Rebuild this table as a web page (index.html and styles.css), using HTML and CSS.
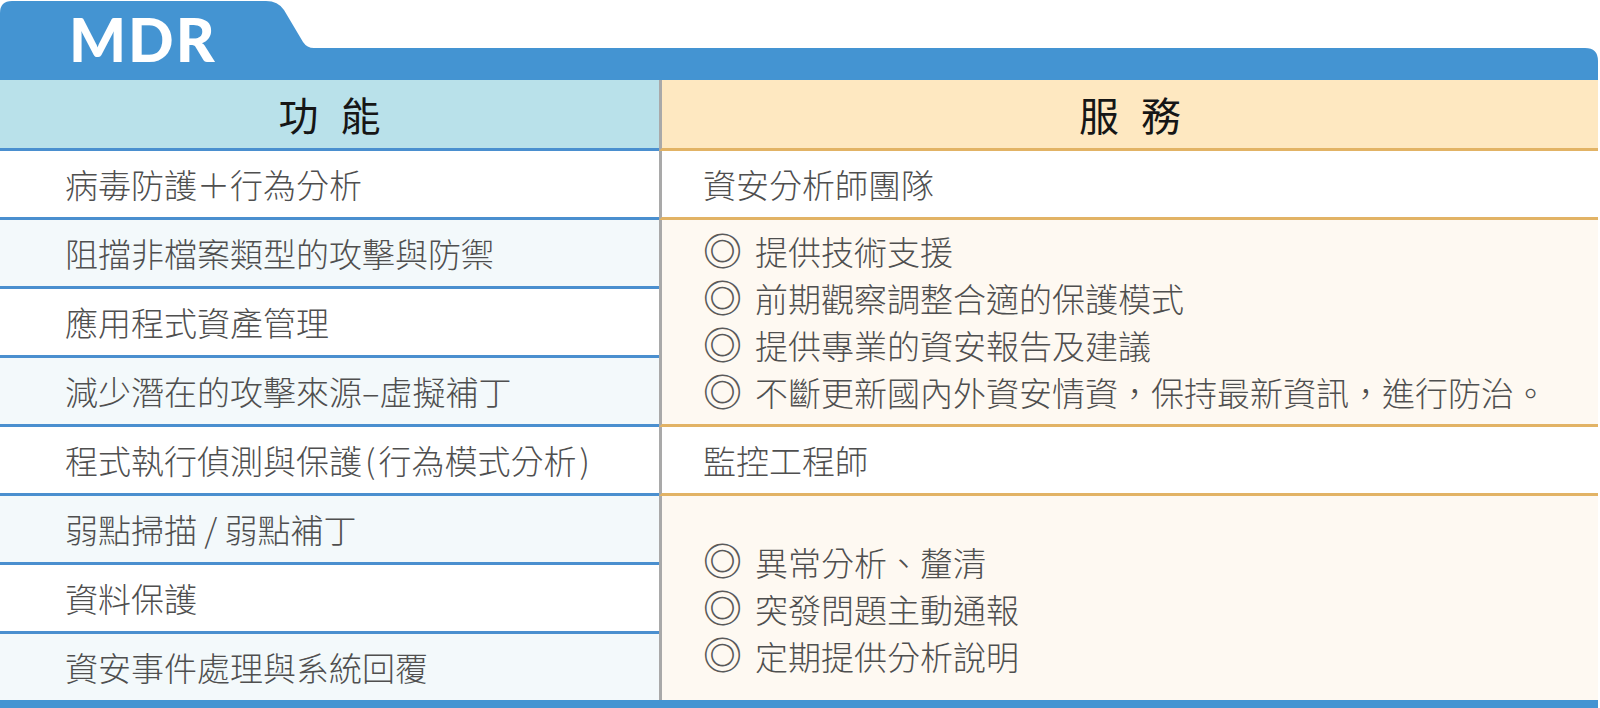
FILE: index.html
```html
<!DOCTYPE html>
<html lang="zh-Hant">
<head>
<meta charset="utf-8">
<title>MDR</title>
<link rel="stylesheet" href="styles.css">
</head>
<body>
<div class="page">
  <div class="topbar"><span class="title">MDR</span></div>
  <div class="table">
    <div class="hd hd-left">功能</div>
    <div class="hd hd-right">服務</div>

    <div class="lcell">病毒防護＋行為分析</div>
    <div class="lcell alt">阻擋非檔案類型的攻擊與防禦</div>
    <div class="lcell">應用程式資產管理</div>
    <div class="lcell alt">減少潛在的攻擊來源–虛擬補丁</div>
    <div class="lcell">程式執行偵測與保護<span class="paren">(</span>行為模式分析<span class="paren">)</span></div>
    <div class="lcell alt">弱點掃描 / 弱點補丁</div>
    <div class="lcell">資料保護</div>
    <div class="lcell alt last">資安事件處理與系統回覆</div>

    <div class="rcell r-team">資安分析師團隊</div>
    <div class="rcell cream r-list1">
      <div class="item"><span class="bullet">◎</span>提供技術支援</div>
      <div class="item"><span class="bullet">◎</span>前期觀察調整合適的保護模式</div>
      <div class="item"><span class="bullet">◎</span>提供專業的資安報告及建議</div>
      <div class="item"><span class="bullet">◎</span>不斷更新國內外資安情資，保持最新資訊，進行防治。</div>
    </div>
    <div class="rcell r-eng">監控工程師</div>
    <div class="rcell cream last r-list2">
      <div class="item"><span class="bullet">◎</span>異常分析、釐清</div>
      <div class="item"><span class="bullet">◎</span>突發問題主動通報</div>
      <div class="item"><span class="bullet">◎</span>定期提供分析說明</div>
    </div>
  </div>
  <div class="bottombar"></div>
</div>
</body>
</html>
```

FILE: styles.css
```css
* { box-sizing: border-box; }
html, body { margin: 0; padding: 0; background: #ffffff; }
body {
  font-family: "Noto Sans CJK TC", "Noto Sans", sans-serif;
  font-weight: 300;
  color: #4f4f4f;
}
.page { width: 1598px; }

.topbar {
  height: 80px;
  background: #4494d2;
  clip-path: path('M0,80 L0,13 Q0,1 12,1 L266,1 Q278,1 284,10 L303,42 Q307,48 314,48 L1585,48 Q1598,48 1598,61 L1598,80 Z');
  padding: 10px 0 0 69px;
}
.title {
  display: block;
  font-family: "Lato", "Open Sans", sans-serif;
  font-weight: 900;
  font-size: 60px;
  line-height: 58px;
  letter-spacing: 2px;
  color: #ffffff;
}

.table {
  display: grid;
  grid-template-columns: 659px 939px;
  grid-template-rows: 71px repeat(7, 69px) 66px;
}

.hd {
  display: flex;
  align-items: center;
  justify-content: center;
  font-size: 40px;
  font-weight: 400;
  color: #161616;
  letter-spacing: 22px;
  padding-left: 22px;
}
.hd-left {
  grid-column: 1; grid-row: 1;
  background: #b9e1ea;
  border-bottom: 3px solid #4a8fcf;
}
.hd-right {
  grid-column: 2; grid-row: 1;
  background: #fee8c1;
  border-bottom: 3px solid #e2b365;
  border-left: 3px solid #a9a9a9;
}

.lcell {
  grid-column: 1;
  display: flex;
  align-items: center;
  padding-left: 65px;
  font-size: 33px;
  background: #ffffff;
  border-bottom: 3px solid #4a8fcf;
  white-space: pre;
}
.lcell.alt { background: #f3f9fb; }
.lcell.last { border-bottom: none; }
.paren { margin: 0 3px; }

.rcell {
  grid-column: 2;
  border-left: 3px solid #a9a9a9;
  border-bottom: 3px solid #e2b365;
  background: #ffffff;
  font-size: 33px;
  padding-left: 41px;
  display: flex;
  flex-direction: column;
  justify-content: center;
}
.rcell.cream { background: #fef9f2; }
.rcell.last { border-bottom: none; }

.r-team { grid-row: 2; }
.r-list1 { grid-row: 3 / span 3; }
.r-eng { grid-row: 6; }
.r-list2 { grid-row: 7 / span 3; padding-top: 22px; }

.item {
  height: 47px;
  line-height: 47px;
  white-space: nowrap;
  display: flex;
  align-items: center;
}
.bullet {
  display: inline-block;
  width: 52px;
  font-family: "DejaVu Sans", sans-serif;
  font-size: 39px;
  line-height: 42px;
  color: #5a5a5a;
}

.bottombar {
  height: 8px;
  background: #4494d2;
}
```
